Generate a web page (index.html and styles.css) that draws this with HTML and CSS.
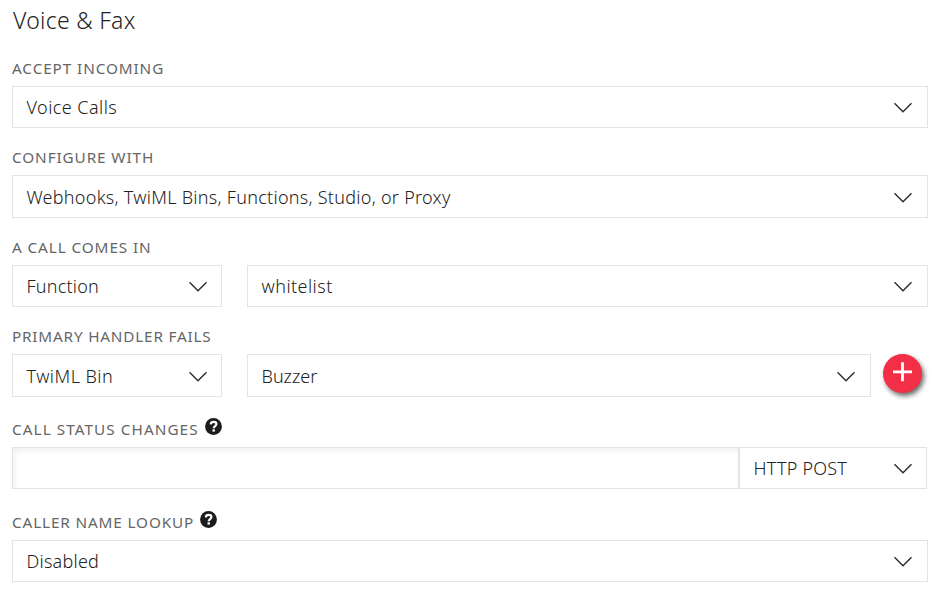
FILE: index.html
```html
<!DOCTYPE html>
<html lang="en">
<head>
<meta charset="utf-8">
<title>Voice &amp; Fax</title>
<link rel="stylesheet" href="styles.css">
</head>
<body>
<svg class="defs" width="0" height="0" aria-hidden="true">
  <symbol id="chevron" viewBox="0 0 20 12"><path d="M1.5 1.3 L10 9.8 L18.5 1.3" fill="none" stroke="#2a2a2a" stroke-width="1.35"/></symbol>
  <symbol id="help" viewBox="0 0 17 17"><circle cx="8.5" cy="8.5" r="8.4" fill="#1c1c1c"/><path d="M5.7 6.4 C5.9 4.5 7 3.9 8.6 3.9 C10.4 3.9 11.4 4.8 11.4 6.1 C11.4 8.1 8.7 8 8.7 10.2" fill="none" stroke="#fff" stroke-width="2.2"/><rect x="7.5" y="11.3" width="2.4" height="2.3" fill="#fff"/></symbol>
</svg>
<main class="panel">
  <h1 class="title">Voice &amp; Fax</h1>

  <div class="label"><span class="t-accept">ACCEPT INCOMING</span></div>
  <div class="select"><span class="t-voice">Voice Calls</span><svg class="chevron"><use href="#chevron"/></svg></div>

  <div class="label"><span class="t-configure">CONFIGURE WITH</span></div>
  <div class="select tall"><span class="t-webhooks">Webhooks, TwiML Bins, Functions, Studio, or Proxy</span><svg class="chevron"><use href="#chevron"/></svg></div>

  <div class="label"><span class="t-comes">A CALL COMES IN</span></div>
  <div class="row">
    <div class="select kind"><span class="t-function">Function</span><svg class="chevron"><use href="#chevron"/></svg></div>
    <div class="select grow"><span class="t-whitelist">whitelist</span><svg class="chevron"><use href="#chevron"/></svg></div>
  </div>

  <div class="label"><span class="t-primary">PRIMARY HANDLER FAILS</span></div>
  <div class="row">
    <div class="select tall kind"><span class="t-twiml">TwiML Bin</span><svg class="chevron"><use href="#chevron"/></svg></div>
    <div class="select tall grow"><span class="t-buzzer">Buzzer</span><svg class="chevron"><use href="#chevron"/></svg></div>
    <button class="add" aria-label="Add"><svg width="39" height="39" viewBox="0 0 39 39"><path d="M10 17.8 H29 M19.5 8.3 V27.3" fill="none" stroke="#fff" stroke-width="2.8"/></svg></button>
  </div>

  <div class="label with-help"><span class="t-status">CALL STATUS CHANGES</span><svg class="help"><use href="#help"/></svg></div>
  <div class="row joined">
    <input class="url" type="text" aria-label="Callback URL">
    <div class="select method"><span class="t-post">HTTP POST</span><svg class="chevron"><use href="#chevron"/></svg></div>
  </div>

  <div class="label with-help last"><span class="t-lookup">CALLER NAME LOOKUP</span><svg class="help"><use href="#help"/></svg></div>
  <div class="select"><span class="t-disabled">Disabled</span><svg class="chevron"><use href="#chevron"/></svg></div>
</main>
</body>
</html>
```
FILE: styles.css
```css
* { box-sizing: border-box; }
body { margin: 0; background: #fff; font-family: "Noto Sans", "Open Sans", sans-serif; color: #222; }
.defs { position: absolute; }
.panel { padding: 0 12px; }
.title { margin: 0; height: 39px; padding-left: 1px; font-size: 23px; font-weight: 300; line-height: 41px; letter-spacing: 0.28px; white-space: nowrap; }
.label { height: 47px; padding-top: 19px; font-size: 15.3px; line-height: 20px; color: #666; white-space: nowrap; letter-spacing: 0.9px; }
.label.with-help { display: flex; align-items: flex-start; gap: 6px; height: 50px; padding-top: 22px; }
.label.with-help.last { height: 51px; padding-top: 23px; }
.help { width: 17px; height: 17px; margin-top: -1px; }
.t-status { letter-spacing: 1.06px; }
.t-primary { letter-spacing: 0.8px; }
.t-lookup { letter-spacing: 0.86px; }
.select { display: flex; align-items: center; justify-content: space-between; height: 42px; padding: 0 14px 0 13.5px; border: 1px solid #e4e4e4; background: #fff; font-size: 18px; font-weight: 300; line-height: 24px; white-space: nowrap; }
.t-voice, .t-whitelist, .t-twiml { letter-spacing: 0.45px; }
.t-webhooks { letter-spacing: 0.27px; }
.t-function, .t-disabled, .t-post { letter-spacing: 0.22px; }
.t-buzzer { letter-spacing: 0; }
.tall { height: 43px; }
.chevron { width: 20px; height: 12px; flex: none; margin-top: 2px; }
.row { display: flex; }
.kind { width: 210px; margin-right: 25px; }
.kind, .method { padding-right: 13.5px; }
.grow { flex: 1; }
.add { width: 39px; height: 39px; margin: 0 6px 0 12px; padding: 0; border: 0; border-radius: 50%; background: #f22f46; box-shadow: 2px 3px 5px rgba(0,0,0,.6); }
.add svg { display: block; }
.joined { padding-right: 1px; }
.url { flex: 1; height: 42px; border: 1px solid #e4e4e4; border-radius: 0; box-shadow: inset 2px 3px 5px rgba(0,0,0,.06); outline: 0; }
.method { width: 188px; }
```
